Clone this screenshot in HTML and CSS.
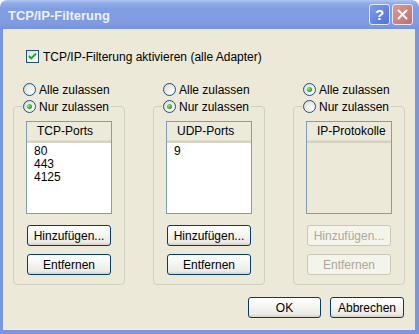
FILE: index.html
```html
<!DOCTYPE html>
<html>
<head>
<meta charset="utf-8">
<link rel="stylesheet" href="styles.css">
</head>
<body>
<div class="window">
  <div class="titlebar">
    <span class="title">TCP/IP-Filterung</span>
    <span class="tb-btn help">?</span>
    <span class="tb-btn close">
      <svg width="11" height="11" viewBox="0 0 11 11"><path d="M1.5 1.5 L9.5 9.5 M9.5 1.5 L1.5 9.5" stroke="#fff" stroke-width="2" stroke-linecap="round"/></svg>
    </span>
  </div>
  <div class="content">
    <label class="check-row">
      <svg class="box" width="13" height="13" viewBox="0 0 13 13">
        <defs><linearGradient id="cg" x1="0" y1="0" x2="1" y2="1"><stop offset="0" stop-color="#dcdcd7"/><stop offset="1" stop-color="#fff"/></linearGradient></defs>
        <rect x="0.5" y="0.5" width="12" height="12" fill="url(#cg)" stroke="#1c5180"/>
        <path d="M3 6 L5.2 8.4 L10 3.6" fill="none" stroke="#21a121" stroke-width="2"/>
      </svg>
      <span>TCP/IP-Filterung aktivieren (alle Adapter)</span>
    </label>

    <div class="columns">
      <!-- TCP -->
      <div class="col">
        <div class="radio-row"><span class="radio"></span>Alle zulassen</div>
        <fieldset class="group">
          <legend><span class="radio-row"><span class="radio on"></span>Nur zulassen</span></legend>
          <div class="listbox">
            <div class="lb-head">TCP-Ports</div>
            <div class="lb-item">80</div>
            <div class="lb-item">443</div>
            <div class="lb-item">4125</div>
          </div>
          <div class="btn first">Hinzufügen...</div>
          <div class="btn">Entfernen</div>
        </fieldset>
      </div>
      <!-- UDP -->
      <div class="col">
        <div class="radio-row"><span class="radio"></span>Alle zulassen</div>
        <fieldset class="group">
          <legend><span class="radio-row"><span class="radio on"></span>Nur zulassen</span></legend>
          <div class="listbox">
            <div class="lb-head">UDP-Ports</div>
            <div class="lb-item">9</div>
          </div>
          <div class="btn first">Hinzufügen...</div>
          <div class="btn">Entfernen</div>
        </fieldset>
      </div>
      <!-- IP -->
      <div class="col">
        <div class="radio-row"><span class="radio on"></span>Alle zulassen</div>
        <fieldset class="group">
          <legend><span class="radio-row"><span class="radio"></span>Nur zulassen</span></legend>
          <div class="listbox disabled">
            <div class="lb-head">IP-Protokolle</div>
          </div>
          <div class="btn first disabled">Hinzufügen...</div>
          <div class="btn disabled">Entfernen</div>
        </fieldset>
      </div>
    </div>

    <div class="footer">
      <div class="btn ok">OK</div>
      <div class="btn cancel">Abbrechen</div>
    </div>
  </div>
</div>
</body>
</html>
```

FILE: styles.css
```css
body {
	margin:0;
	background:#fff;
	font-family:"Liberation Sans", Arial, sans-serif;
	font-size:12px;
	color:#000;
}
.window {
	width:419px;
	height:334px;
	display:flex;
	flex-direction:column;
	border-radius:7px 7px 0 0;
	overflow:hidden;
}
.titlebar {
	height:29px;
	flex:none;
	display:flex;
	align-items:center;
	padding:0 6px 0 8px;
	background:linear-gradient(#b0c6f2 0, #93ade9 3px, #829ee3 8px, #7f9be2 80%, #7693dd 100%);
}
.title {
	flex:1;
	color:#eef2fc;
	font-weight:bold;
	font-size:13px;
	padding-top:1px;
}
.tb-btn {
	width:19px;
	height:19px;
	border:1px solid #e3e9f8;
	border-radius:3px;
	display:flex;
	align-items:center;
	justify-content:center;
}
.help {
	background:linear-gradient(135deg, #7d9cf0, #4d72dc);
	color:#fff;
	font-weight:bold;
	font-size:15px;
	margin-right:2px;
}
.close {
	background:linear-gradient(135deg, #d99a98, #c06e6c);
}
.content {
	flex:1;
	background:#ece9d8;
	border:solid #7a96df;
	border-width:0 4px 4px 3px;
	padding:21px 0 0 10px;
}
.check-row {
	display:flex;
	align-items:center;
	gap:4px;
	height:13px;
	margin-left:13px;
}
.columns {
	display:flex;
	gap:28px;
	margin-top:20px;
}
.col {
	width:112px;
}
.radio-row {
	display:flex;
	align-items:center;
	gap:3px;
	height:13px;
	margin-left:10px;
}
legend .radio-row {
	margin-left:0;
}
.radio {
	width:11px;
	height:11px;
	border:1px solid #1c5180;
	border-radius:50%;
	background:radial-gradient(circle at 70% 70%, #fff 0, #f0efe8 40%, #d6d5cc 100%);
	display:flex;
	align-items:center;
	justify-content:center;
}
.radio.on::after {
	content:"";
	width:5px;
	height:5px;
	border-radius:50%;
	background:radial-gradient(circle at 35% 35%, #8ee38e 0, #21a121 70%);
}
.group {
	margin:4px 0 0 0;
	box-sizing:border-box;
	width:112px;
	border:1px solid #d0d0bf;
	border-radius:4px;
	padding:0 12px 9px 12px;
}
.group legend {
	padding:0 2px 0 1px;
	margin-left:-4px;
}
.listbox {
	margin-top:8px;
	height:93px;
	box-sizing:border-box;
	border:1px solid #7f9db9;
	background:#fff;
}
.listbox.disabled {
	background:#ece9d8;
}
.lb-head {
	height:21px;
	box-sizing:border-box;
	line-height:19px;
	padding-left:10px;
	background:#ebeadb;
	border-bottom:2px solid #d6d2c2;
	box-shadow:inset 0 -1px 0 #e2decd;
	margin-bottom:2px;
}
.lb-item {
	height:13px;
	line-height:13px;
	padding-left:7px;
}
.btn {
	box-sizing:border-box;
	height:21px;
	border:1px solid #003c74;
	border-radius:3px;
	background:linear-gradient(#fff 0, #f6f6f2 40%, #ecebe5 85%, #d6d0c5 100%);
	display:flex;
	align-items:center;
	justify-content:center;
}
.group .btn {
	width:84px;
	margin:8px 0 0 1px;
}
.group .btn.first {
	margin-top:11px;
}
.btn.disabled {
	border-color:#c9c7ba;
	background:#f5f4ea;
	color:#aca899;
}
.footer {
	display:flex;
	justify-content:flex-end;
	gap:9px;
	margin:12px 11px 0 0;
}
.ok {
	width:73px;
}
.cancel {
	width:74px;
}
```
